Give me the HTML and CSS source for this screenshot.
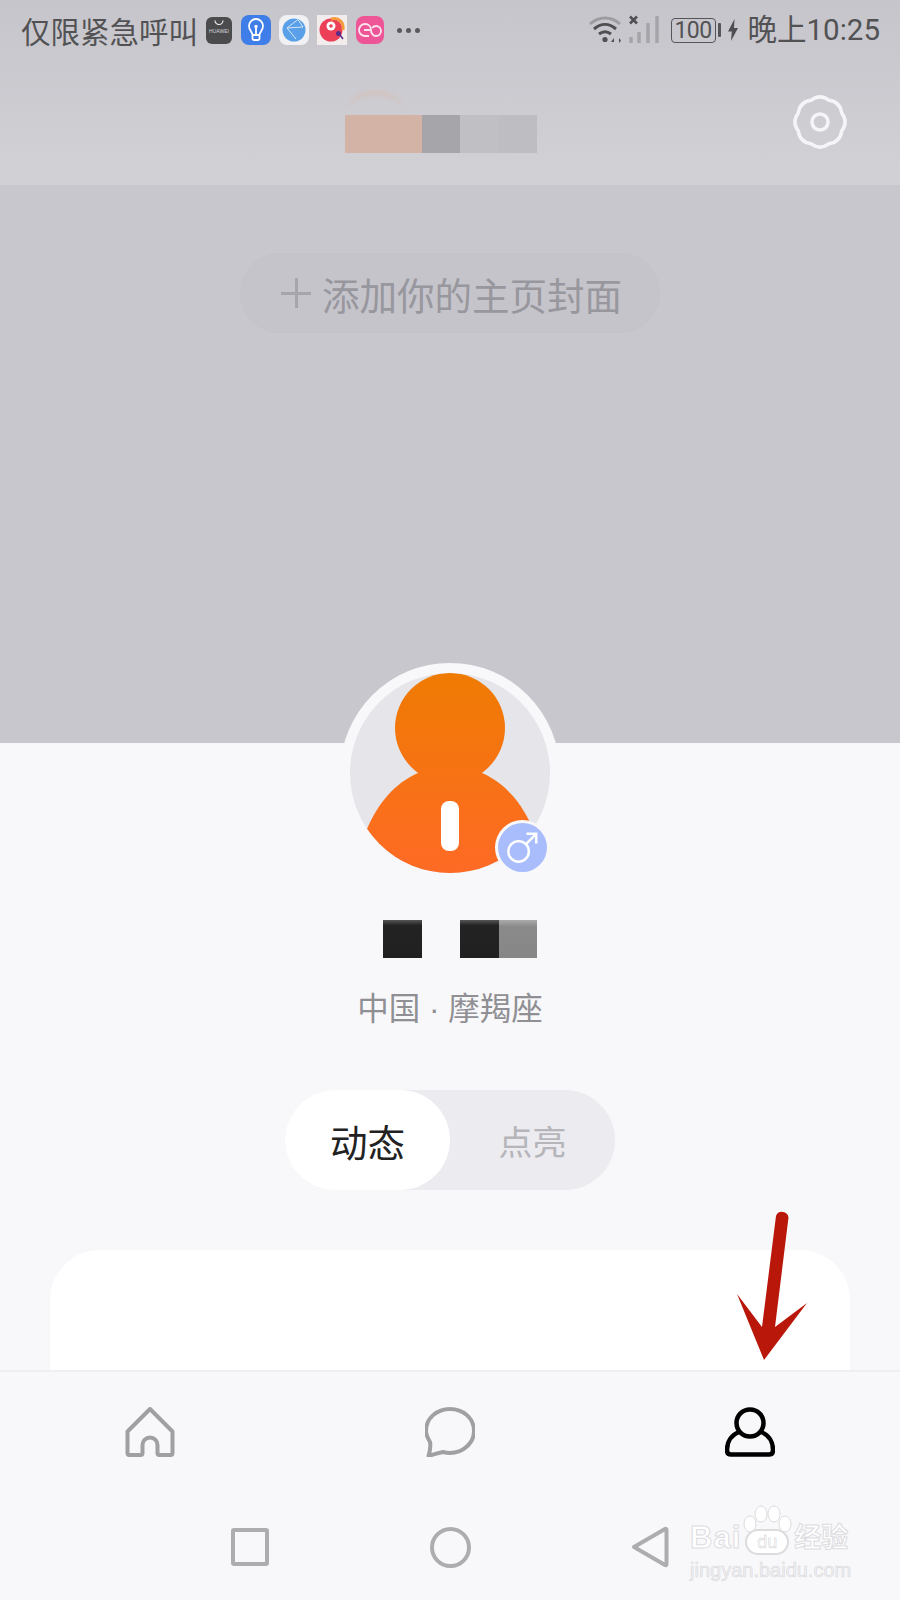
FILE: index.html
```html
<!DOCTYPE html>
<html lang="zh-CN">

<head>
    <meta charset="UTF-8">
    <meta name="viewport" content="width=device-width, initial-scale=1.0">
    <title>我的主页</title>
    <link rel="stylesheet" href="styles.css">
</head>

<body>
    <div class="screen">
        <header class="top">
            <div class="status-bar">
                <div class="status-left">
                    <span class="carrier">仅限紧急呼叫</span>
                    <span class="app app-huawei">
                        <svg class="bag" viewBox="0 0 12 5"><path d="M2 0.5a4 4 0 0 0 8 0" /></svg>
                        <span class="huawei-text">HUAWEI</span>
                    </span>
                    <span class="app app-bulb">
                        <svg viewBox="0 0 30 30"><path d="M11.5 20c0-3-3.5-4.5-3.5-9a7 7 0 0 1 14 0c0 4.5-3.5 6-3.5 9zM11.5 20v3.5a1.5 1.5 0 0 0 1.5 1.5h4a1.5 1.5 0 0 0 1.5-1.5V20M15 13v6" /><circle cx="15" cy="11.5" r="1.7" /></svg>
                    </span>
                    <span class="app app-globe">
                        <svg viewBox="0 0 30 30"><circle class="globe-fill" cx="15" cy="15" r="11.5" /><path class="globe-line" d="M19 4.5 8 13l9 11M8 13l16-1M19 4.5l5 7.5" /></svg>
                    </span>
                    <span class="app app-bird">
                        <svg viewBox="0 0 30 30"><circle cx="14" cy="15" r="11.5" fill="#ec4058" /><path d="M14 4c8-2 13 3 12 11" fill="none" stroke="#f49a3a" stroke-width="3" /><circle cx="14" cy="11" r="4.5" fill="#fff" /><circle cx="14" cy="11" r="1.8" fill="#ec4058" /><circle cx="21.5" cy="18.5" r="2.5" fill="#5a2a86" /><path d="M23 20l3 4" stroke="#5a2a86" stroke-width="1.5" /></svg>
                    </span>
                    <span class="app app-loop">
                        <svg viewBox="0 0 28 28"><path d="M8 14h7c0-3-2-6-6-6a6 6 0 0 0 0 12h4M15 14c0 3 2 6 5 6a5 5 0 0 0 0-10c-2 0-3 .8-4 2" /></svg>
                    </span>
                    <span class="more-dots"><i></i><i></i><i></i></span>
                </div>
                <div class="status-right">
                    <svg class="wifi" viewBox="0 0 34 30">
                        <path class="wifi-faint" d="M2 9c9-8 21-8 30 0" />
                        <path class="wifi-dark" d="M6 14c7-6 15-6 22 0M11 19c4-3 8-3 12 0" />
                        <circle cx="17" cy="24.5" r="2.6" fill="#4f4f52" />
                        <path d="M23 27l3-4v4zM29 22v6M31 28v-5l2 2.5z" fill="#4f4f52" />
                    </svg>
                    <svg class="signal" viewBox="0 0 32 30">
                        <path class="signal-x" d="M2 1.5l7 7M9 1.5l-7 7" />
                        <path class="signal-bars" d="M3 22v6M11 17v11M20 8v20M29 1v27" />
                    </svg>
                    <span class="battery">100</span>
                    <span class="battery-tip"></span>
                    <svg class="bolt" viewBox="0 0 10 22"><path d="M6.5 0 0 12.5h3.8L3 22l7-13H6z" /></svg>
                    <span class="clock">晚上10:25</span>
                </div>
            </div>
            <div class="title-row">
                <div class="title-blocks">
                    <span class="smudge"></span>
                    <span class="tile tile-peach"></span>
                    <span class="tile tile-grey"></span>
                    <span class="tile tile-light"></span>
                    <span class="tile tile-lighter"></span>
                </div>
                <svg class="gear" viewBox="-30 -30 60 60">
                    <path d="M-9 -21.7Q0 -28.5 9 -21.7Q20.15 -20.15 21.7 -9Q28.5 0 21.7 9Q20.15 20.15 9 21.7Q0 28.5 -9 21.7Q-20.15 20.15 -21.7 9Q-28.5 0 -21.7 -9Q-20.15 -20.15 -9 -21.7Z" />
                    <circle r="8" />
                </svg>
            </div>
        </header>

        <section class="cover">
            <div class="cover-btn">
                <span class="cover-plus"></span>
                <span>添加你的主页封面</span>
            </div>
        </section>

        <main class="profile">
            <div class="avatar-ring">
                <svg class="avatar" viewBox="0 0 200 200">
                    <defs>
                        <linearGradient id="orange" gradientUnits="userSpaceOnUse" x1="0" y1="0" x2="0" y2="200">
                            <stop offset="0" stop-color="#ef7b02" />
                            <stop offset="1" stop-color="#fe6a25" />
                        </linearGradient>
                        <clipPath id="round">
                            <circle cx="100" cy="100" r="100" />
                        </clipPath>
                    </defs>
                    <g clip-path="url(#round)">
                        <rect width="200" height="200" fill="#e5e5ea" />
                        <g class="avatar-art">
                            <circle cx="100" cy="55" r="55" fill="url(#orange)" />
                            <path d="M68 100C45 110 28 130 17 156L17 210L183 210L183 156C172 130 155 110 132 100Z" fill="url(#orange)" />
                            <rect x="91" y="128" width="18" height="50" rx="8" fill="#fff" />
                        </g>
                    </g>
                </svg>
                <span class="gender">
                    <svg viewBox="0 0 50 50">
                        <circle cx="21" cy="29" r="10.5" />
                        <path d="M28.5 21.5 39 11M29 11h10v10" />
                    </svg>
                </span>
            </div>

            <div class="name-blocks">
                <span class="tile tile-black"></span>
                <span class="tile tile-gap"></span>
                <span class="tile tile-black"></span>
                <span class="tile tile-mid"></span>
            </div>
            <p class="location">中国 · 摩羯座</p>

            <div class="switch">
                <span class="switch-item switch-active">动态</span>
                <span class="switch-item">点亮</span>
            </div>

            <div class="feed-card"></div>
        </main>

        <footer class="bottom">
            <nav class="tabs">
                <svg class="tab-icon" viewBox="0 0 50 50">
                    <path d="M25 2 2.5 24.5V46a2 2 0 0 0 2 2h11a2 2 0 0 0 2-2V38a7.5 7.5 0 0 1 15 0v8a2 2 0 0 0 2 2h11a2 2 0 0 0 2-2V24.5Z" />
                </svg>
                <svg class="tab-icon" viewBox="0 0 50 50">
                    <path d="M5 35C2 30 1 27 1 24 1 11 12 2 25 2s24 9 24 22c0 12-11 22-24 22-3 0-5-.5-7-1-5 1-10 2.5-14.5 4C5 44 6 40 5 35Z" />
                </svg>
                <svg class="tab-icon tab-active" viewBox="0 0 50 50">
                    <circle cx="25" cy="16" r="13.5" />
                    <path d="M14 25C6 28 2 35 2 43c0 3 1 4.5 4 4.5h38c3 0 4-1.5 4-4.5 0-8-4-15-12-18" />
                </svg>
            </nav>
            <div class="sys-nav">
                <span class="sys-square"></span>
                <span class="sys-circle"></span>
                <svg class="sys-back" viewBox="0 0 38 42"><path d="M3 21 34 3a1 1 0 0 1 1.5 1v34a1 1 0 0 1-1.5 1Z" /></svg>
            </div>
        </footer>

        <!-- red arrow over the tab bar -->
        <svg class="arrow" viewBox="0 0 80 160">
            <path d="M46 6a6.5 6.5 0 0 1 12.5 1.5L45 117 77 93 34 150 7 84 32 117Z" />
        </svg>

        <div class="watermark">
            <div class="wm-top">
                <span class="wm-bai">Bai</span>
                <span class="wm-paw">
                    <svg viewBox="0 0 50 32">
                        <ellipse cx="8" cy="19" rx="6" ry="8" />
                        <ellipse cx="19" cy="9" rx="6" ry="8" />
                        <ellipse cx="32" cy="9" rx="6" ry="8" />
                        <ellipse cx="43" cy="19" rx="6" ry="8" />
                    </svg>
                    <span class="wm-du">du</span>
                </span>
                <span class="wm-jy">经验</span>
            </div>
            <div class="wm-url">jingyan.baidu.com</div>
        </div>
    </div>
</body>

</html>
```

FILE: styles.css
```css
* {
    box-sizing: border-box;
}

body {
    margin: 0;
    padding: 0;
    font-family: 'Noto Sans CJK SC', 'Noto Sans', sans-serif;
    background-color: #f8f8fa;
}

.screen {
    position: relative;
    width: 900px;
    height: 1600px;
    overflow: hidden;
    display: flex;
    flex-direction: column;
    background-color: #f8f8fa;
}

/* header + status bar */
.top {
    height: 185px;
    background: linear-gradient(180deg, #c6c5cb 0%, #d2d1d6 100%);
}

.status-bar {
    height: 60px;
    display: flex;
    justify-content: space-between;
    align-items: center;
    padding: 0 20px 0 21px;
    color: #525254;
}

.status-left,
.status-right {
    display: flex;
    align-items: center;
}

.carrier {
    font-size: 29.5px;
    line-height: 60px;
    width: 185px;
    white-space: nowrap;
}

.app {
    display: flex;
    width: 30px;
    height: 30px;
    margin-right: 8px;
    border-radius: 8px;
    overflow: hidden;
}

.app svg {
    width: 100%;
    height: 100%;
}

.app-huawei {
    flex-direction: column;
    align-items: center;
    width: 26px;
    height: 27px;
    margin-right: 9px;
    border-radius: 6px;
    background-color: #4b4b4d;
}

.app-huawei .bag {
    width: 12px;
    height: 5px;
    margin-top: 3px;
    flex: none;
}

.bag path {
    fill: none;
    stroke: #e8e8ea;
    stroke-width: 1.2;
}

.huawei-text {
    font-family: 'Liberation Sans', sans-serif;
    font-size: 5px;
    line-height: 9px;
    margin-top: 2px;
    color: #d8d8da;
}

.app-bulb {
    background-color: #3f7de8;
}

.app-bulb path {
    fill: none;
    stroke: #fff;
    stroke-width: 1.8;
}

.app-bulb circle {
    fill: #fff;
}

.app-globe {
    background-color: #f1f1f3;
}

.globe-fill {
    fill: #5aa0e8;
}

.globe-line {
    fill: none;
    stroke: #d5e6f7;
    stroke-width: 1;
}

.app-bird {
    background-color: #f2ecec;
    border-radius: 0;
    margin-right: 9px;
}

.app-loop {
    width: 28px;
    height: 28px;
    background-color: #ee5596;
    margin-right: 13px;
}

.app-loop path {
    fill: none;
    stroke: #fbe4ee;
    stroke-width: 1.8;
}

.more-dots {
    display: flex;
    gap: 4px;
}

.more-dots i {
    display: block;
    width: 5px;
    height: 5px;
    border-radius: 50%;
    background-color: #5a5a5c;
}

.wifi {
    width: 34px;
    height: 30px;
    margin-right: 6px;
}

.wifi-faint {
    fill: none;
    stroke: #9d9da1;
    stroke-width: 3;
}

.wifi-dark {
    fill: none;
    stroke: #4f4f52;
    stroke-width: 3;
}

.signal {
    width: 32px;
    height: 30px;
    margin-right: 11px;
}

.signal-x {
    fill: none;
    stroke: #4f4f52;
    stroke-width: 2.5;
}

.signal-bars {
    fill: none;
    stroke: #a5a5a9;
    stroke-width: 3.5;
}

.battery {
    width: 45px;
    height: 25px;
    border: 1.5px solid #555557;
    border-radius: 4px;
    font-family: 'Roboto', sans-serif;
    font-size: 23px;
    line-height: 23px;
    text-align: center;
    letter-spacing: -0.5px;
}

.battery-tip {
    width: 3px;
    height: 14px;
    margin: 0 7px 0 2px;
    border-radius: 1px;
    background-color: #555557;
}

.bolt {
    width: 10px;
    height: 22px;
    margin-right: 10px;
}

.bolt path {
    fill: #4f4f52;
}

.clock {
    font-size: 29.5px;
    line-height: 60px;
    white-space: nowrap;
    font-family: 'Roboto', 'Noto Sans CJK SC', sans-serif;
}

.title-row {
    position: relative;
    height: 125px;
    display: flex;
    justify-content: center;
    align-items: flex-start;
    padding: 55px 18px 0 0;
}

.title-blocks,
.name-blocks {
    position: relative;
    display: flex;
}

.tile {
    display: block;
    width: 38.5px;
    height: 38px;
}

.tile-peach {
    width: 77px;
    background-color: #d2b3a5;
}

.tile-grey {
    background-color: #a6a5aa;
}

.tile-light {
    background-color: #c0bfc4;
}

.tile-lighter {
    background-color: #bebdc2;
}

.smudge {
    position: absolute;
    left: 2px;
    top: -24px;
    width: 56px;
    height: 40px;
    border-radius: 50%;
    border-top: 4px solid #d6bdb0;
    opacity: 0.7;
    filter: blur(2px);
}

.gear {
    position: absolute;
    right: 50px;
    top: 32px;
    width: 60px;
    height: 60px;
}

.gear path,
.gear circle {
    fill: none;
    stroke: #f5f5f7;
    stroke-width: 3.5;
}

/* cover */
.cover {
    height: 558px;
    display: flex;
    justify-content: center;
    align-items: flex-start;
    padding-top: 68px;
    background-color: #c8c7cd;
}

.cover-btn {
    width: 420px;
    height: 80px;
    display: flex;
    align-items: center;
    gap: 11px;
    padding-left: 40px;
    border: 1px solid #c4c3c9;
    border-radius: 40px;
    background-color: #c5c4ca;
    font-size: 37.5px;
    color: #98979e;
    white-space: nowrap;
}

.cover-plus {
    position: relative;
    flex: none;
    width: 30px;
    height: 30px;
    background:
        linear-gradient(#a6a5ac, #a6a5ac) center / 30px 3px no-repeat,
        linear-gradient(#a6a5ac, #a6a5ac) center / 3px 30px no-repeat;
}

/* profile */
.profile {
    flex: 1;
    min-height: 0;
    overflow: hidden;
    display: flex;
    flex-direction: column;
    align-items: center;
    margin-top: -80px;
}

.avatar-ring {
    position: relative;
    flex: none;
    width: 220px;
    height: 220px;
    padding: 10px;
    border-radius: 50%;
    background-color: #f8f8fa;
}

.avatar {
    display: block;
    width: 200px;
    height: 200px;
}

.avatar-art {
    filter: blur(0.7px);
}

.gender {
    position: absolute;
    left: 155px;
    top: 157px;
    width: 55px;
    height: 55px;
    padding: 3px;
    border-radius: 50%;
    background-color: #f8f8fa;
}

.gender svg {
    display: block;
    width: 49px;
    height: 49px;
    border-radius: 50%;
    background-color: #a9bdfd;
}

.gender circle,
.gender path {
    fill: none;
    stroke: #fff;
    stroke-width: 2.5;
}

.name-blocks {
    flex: none;
    margin: 37px 0 0 20px;
}

.tile-black {
    background: linear-gradient(180deg, #555 0%, #232323 14%, #202020 100%);
}

.tile-gap {
    background: none;
}

.tile-mid {
    background: linear-gradient(180deg, #aaa 0%, #8a8a8a 18%, #868686 100%);
}

.location {
    flex: none;
    margin: 29px 0 0;
    font-family: 'Liberation Sans', 'Noto Sans CJK SC', sans-serif;
    font-size: 31.5px;
    line-height: 45px;
    color: #8f8f94;
    white-space: nowrap;
}

.switch {
    flex: none;
    display: flex;
    width: 330px;
    height: 100px;
    margin-top: 58px;
    border-radius: 50px;
    background-color: #ebebf0;
}

.switch-item {
    flex: 1;
    display: flex;
    justify-content: center;
    align-items: center;
    border-radius: 50px;
    font-size: 34px;
    color: #b5b5ba;
}

.switch-active {
    font-size: 37.5px;
    color: #222;
    background-color: #fff;
}

.feed-card {
    flex: none;
    width: 800px;
    height: 200px;
    margin-top: 60px;
    border-radius: 50px 50px 0 0;
    background-color: #fff;
}

/* bottom */
.bottom {
    height: 230px;
    border-top: 2px solid #efeff1;
    background-color: #f8f8fa;
}

.tabs {
    display: grid;
    grid-template-columns: repeat(3, 300px);
    justify-items: center;
    padding-top: 35px;
    height: 154px;
}

.tab-icon {
    width: 50px;
    height: 50px;
}

.tab-icon path,
.tab-icon circle {
    fill: none;
    stroke: #a0a0a2;
    stroke-width: 4;
    stroke-linejoin: round;
}

.tab-active path,
.tab-active circle {
    stroke: #000;
    stroke-width: 4.5;
}

.sys-nav {
    display: grid;
    grid-template-columns: 200px 200px 200px;
    justify-content: center;
    justify-items: center;
    align-items: center;
    height: 42px;
}

.sys-square {
    width: 38px;
    height: 38px;
    border: 4px solid #adadaf;
    border-radius: 3px;
}

.sys-circle {
    width: 41px;
    height: 41px;
    border: 4px solid #adadaf;
    border-radius: 50%;
}

.sys-back {
    width: 38px;
    height: 42px;
}

.sys-back path {
    fill: none;
    stroke: #adadaf;
    stroke-width: 4;
    stroke-linejoin: round;
}

/* overlays */
.arrow {
    position: absolute;
    left: 730px;
    top: 1210px;
    width: 80px;
    height: 160px;
}

.arrow path {
    fill: #b9170a;
}

.watermark {
    position: absolute;
    left: 690px;
    top: 1503px;
    width: 165px;
    color: #fff;
    font-family: 'Liberation Sans', 'Noto Sans CJK SC', sans-serif;
}

.wm-top {
    display: flex;
    align-items: flex-end;
    height: 52px;
    -webkit-text-stroke: 1px #dcdcdf;
}

.wm-bai {
    font-size: 31px;
    font-weight: bold;
    line-height: 34px;
    letter-spacing: 1px;
}

.wm-paw {
    position: relative;
    width: 50px;
    height: 50px;
    margin-left: 1px;
    flex: none;
}

.wm-paw svg {
    position: absolute;
    left: 0;
    top: 0;
    width: 50px;
    height: 32px;
}

.wm-paw ellipse {
    fill: #fff;
    stroke: #dcdcdf;
    stroke-width: 1;
}

.wm-du {
    position: absolute;
    left: 3px;
    bottom: 0;
    width: 44px;
    height: 26px;
    border: 2px solid #dcdcdf;
    border-radius: 13px;
    background-color: #fff;
    font-size: 18px;
    line-height: 22px;
    text-align: center;
    -webkit-text-stroke: 0.5px #cfcfd3;
}

.wm-jy {
    font-size: 27px;
    line-height: 34px;
    margin-left: 2px;
    font-weight: bold;
    white-space: nowrap;
}

.wm-url {
    font-size: 20px;
    line-height: 24px;
    margin-top: 3px;
    color: #f2f2f4;
    -webkit-text-stroke: 0.6px #d8d8dc;
    white-space: nowrap;
}
```
